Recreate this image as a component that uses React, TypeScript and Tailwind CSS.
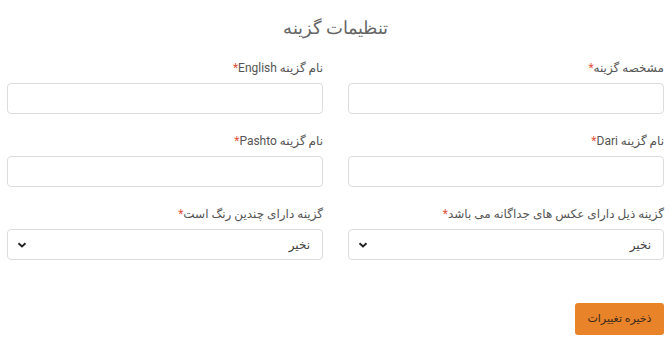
import React from "react";

const fieldClass =
  "w-full h-[31px] rounded-[4px] border border-[#dcdcdc] bg-white px-3 text-[12px] text-[#444] outline-none";

function Label({ text }: { text: string }) {
  return (
    <label className="block mb-[6px] h-[18px] text-[12px] leading-[18px] text-[#555]">
      {text}
      <span className="text-[#e0533b]">*</span>
    </label>
  );
}

function Chevron() {
  return (
    <svg width="10" height="10" viewBox="0 0 10 10" className="text-[#222]">
      <path d="M1.5 3.2 L5 6.5 L8.5 3.2" fill="none" stroke="currentColor" strokeWidth="1.9" />
    </svg>
  );
}

function SelectBox({ value }: { value: string }) {
  return (
    <div className={fieldClass + " flex items-center justify-between pl-[9px]"}>
      <span>{value}</span>
      <Chevron />
    </div>
  );
}

export default function App() {
  return (
    <div
      dir="rtl"
      className="w-[671px] h-[350px] bg-white px-[7px] pt-[15px]"
      style={{ fontFamily: "Roboto, 'DejaVu Sans', sans-serif" }}
    >
      <h2 className="text-center text-[18px] leading-[26px] font-light text-[#666] mb-[18px]">
        تنظیمات گزینه
      </h2>
      <div className="grid grid-cols-2 gap-x-[25px] gap-y-[18px]">
        <div>
          <Label text="مشخصه گزینه" />
          <input className={fieldClass} />
        </div>
        <div>
          <Label text="نام گزینه English" />
          <input className={fieldClass} />
        </div>
        <div>
          <Label text="نام گزینه Dari" />
          <input className={fieldClass} />
        </div>
        <div>
          <Label text="نام گزینه Pashto" />
          <input className={fieldClass} />
        </div>
        <div>
          <Label text="گزینه ذیل دارای عکس های جداگانه می باشد" />
          <SelectBox value="نخیر" />
        </div>
        <div>
          <Label text="گزینه دارای چندین رنگ است" />
          <SelectBox value="نخیر" />
        </div>
      </div>
      <div className="mt-[43px] flex">
        <button className="h-[32px] w-[89px] rounded-[3px] bg-[#e8832a] text-[11px] text-[#3a2a1a]">
          ذخیره تغییرات
        </button>
      </div>
    </div>
  );
}
